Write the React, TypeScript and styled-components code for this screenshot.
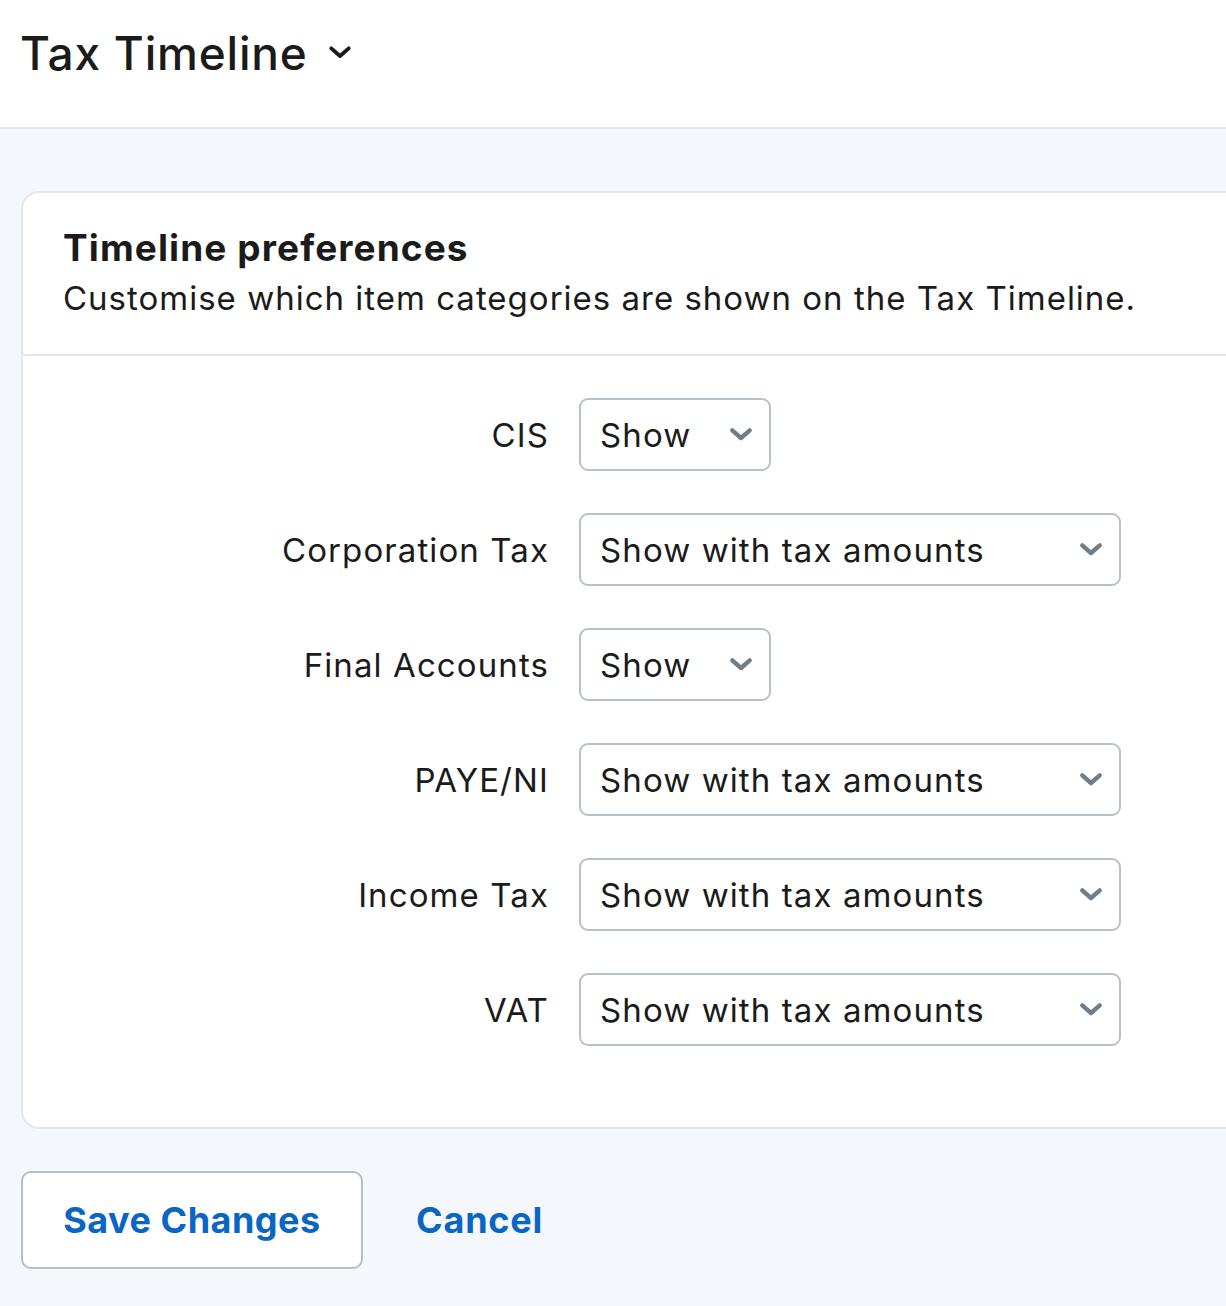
import React from 'react';
import styled, { createGlobalStyle } from 'styled-components';

const GlobalStyle = createGlobalStyle`
    html, body {
        margin: 0;
        padding: 0;
        overflow: hidden;
        background: #f4f7fc;
        font-family: Inter, "Open Sans", sans-serif;
        color: #1b1b1b;
    }
`;

const Header = styled.header`
    height: 129px;
    background: #ffffff;
    border-bottom: 2px solid #e1e6ec;
    display: flex;
    align-items: center;
    padding: 0 20px 22px;
    box-sizing: border-box;
`;

const PageTitle = styled.h1`
    margin: 0;
    font-size: 46px;
    font-weight: 500;
    letter-spacing: 0.8px;
    display: flex;
    align-items: center;
    gap: 20px;
`;

const Main = styled.main`
    padding: 62px 0 40px 21px;
`;

const Card = styled.section`
    width: 1260px;
    background: #ffffff;
    border: 2px solid #e2e7ee;
    border-radius: 18px;
`;

const CardHead = styled.div`
    padding: 31px 40px 34px;
    border-bottom: 2px solid #e2e7ee;
`;

const CardTitle = styled.h2`
    margin: 0;
    font-size: 37px;
    font-weight: 700;
    line-height: 48px;
    letter-spacing: 1.1px;
`;

const CardText = styled.p`
    margin: 4px 0 0;
    font-size: 33px;
    line-height: 44px;
    letter-spacing: 1px;
`;

const Form = styled.div`
    padding: 42px 0 81px;
    display: flex;
    flex-direction: column;
    gap: 42px;
`;

const Row = styled.div`
    display: grid;
    grid-template-columns: 524px auto;
    column-gap: 32px;
    align-items: center;
`;

const Label = styled.label`
    text-align: right;
    font-size: 33px;
    letter-spacing: 1.1px;
    margin-right: -2px;
`;

const Select = styled.div<{ $wide?: boolean }>`
    width: ${(p) => (p.$wide ? '542px' : '192px')};
    height: 73px;
    box-sizing: border-box;
    border: 2px solid #b9c0c7;
    border-radius: 9px;
    display: flex;
    align-items: center;
    justify-content: space-between;
    padding: 0 16px 0 19px;
    font-size: 33px;
    letter-spacing: 1.1px;
    background: #fff;
`;

const Actions = styled.div`
    display: flex;
    align-items: center;
    gap: 53px;
    margin-top: 42px;
`;

const SaveButton = styled.button`
    width: 342px;
    height: 98px;
    border: 2px solid #b8bec6;
    border-radius: 10px;
    background: #ffffff;
    color: #0a66c2;
    font-family: inherit;
    font-size: 36px;
    font-weight: 700;
    letter-spacing: 0.5px;
`;

const CancelLink = styled.a`
    color: #0a66c2;
    font-size: 36px;
    font-weight: 700;
    letter-spacing: 0.8px;
    text-decoration: none;
`;

const Chevron = ({ size = 22, color = '#1b1b1b', weight = 4 }) => (
    <svg width={size} height={size * 0.6} viewBox="0 0 22 13" fill="none">
        <path d="M3 3 L11 10 L19 3" stroke={color} strokeWidth={weight} strokeLinecap="round" strokeLinejoin="round" />
    </svg>
);

const rows = [
    { label: 'CIS', value: 'Show', wide: false },
    { label: 'Corporation Tax', value: 'Show with tax amounts', wide: true },
    { label: 'Final Accounts', value: 'Show', wide: false },
    { label: 'PAYE/NI', value: 'Show with tax amounts', wide: true },
    { label: 'Income Tax', value: 'Show with tax amounts', wide: true },
    { label: 'VAT', value: 'Show with tax amounts', wide: true },
];

//------------------Component------------------
const App = () => {
    return (
        <>
            <GlobalStyle />
            <Header>
                <PageTitle>
                    Tax Timeline
                    <Chevron size={24} weight={3.5} />
                </PageTitle>
            </Header>
            <Main>
                <Card>
                    <CardHead>
                        <CardTitle>Timeline preferences</CardTitle>
                        <CardText>Customise which item categories are shown on the Tax Timeline.</CardText>
                    </CardHead>
                    <Form>
                        {rows.map((r) => (
                            <Row key={r.label}>
                                <Label>{r.label}</Label>
                                <Select $wide={r.wide}>
                                    {r.value}
                                    <Chevron size={24} color="#6f7e8b" weight={4} />
                                </Select>
                            </Row>
                        ))}
                    </Form>
                </Card>
                <Actions>
                    <SaveButton>Save Changes</SaveButton>
                    <CancelLink href="#">Cancel</CancelLink>
                </Actions>
            </Main>
        </>
    );
};

export default App;
